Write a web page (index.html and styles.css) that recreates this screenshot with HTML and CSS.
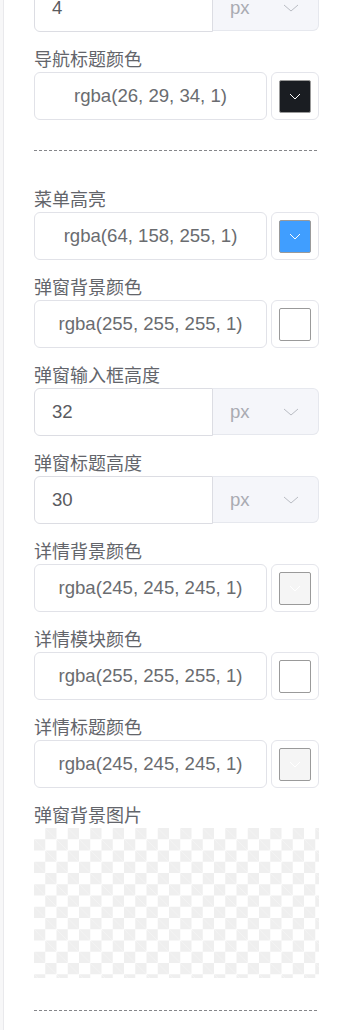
FILE: index.html
```html
<!DOCTYPE html>
<html lang="zh">
<head>
<meta charset="utf-8">
<link rel="stylesheet" href="styles.css">
</head>
<body>
<div class="page">
  <div class="rail"></div>
  <div class="content">
    <div class="item">
      <div class="num-row">
        <div class="num">4</div>
        <div class="unit"><span>px</span><svg class="chev" viewBox="0 0 16 8"><path d="M1 1 L8 7 L15 1" fill="none" stroke="#b9bcc3" stroke-width="1"/></svg></div>
      </div>
    </div>
    <div class="item">
      <div class="label">导航标题颜色</div>
      <div class="color-row">
        <div class="cinput">rgba(26, 29, 34, 1)</div>
        <div class="picker"><div class="swatch" style="background: rgba(26, 29, 34, 1)"><svg class="sw-chev" viewBox="0 0 12 7"><path d="M1 1 L6 6 L11 1" fill="none" stroke="#fff" stroke-width="1"/></svg></div></div>
      </div>
    </div>
    <div class="divider"></div>
    <div class="item">
      <div class="label">菜单高亮</div>
      <div class="color-row">
        <div class="cinput">rgba(64, 158, 255, 1)</div>
        <div class="picker"><div class="swatch" style="background: rgba(64, 158, 255, 1)"><svg class="sw-chev" viewBox="0 0 12 7"><path d="M1 1 L6 6 L11 1" fill="none" stroke="#fff" stroke-width="1"/></svg></div></div>
      </div>
    </div>
    <div class="item">
      <div class="label">弹窗背景颜色</div>
      <div class="color-row">
        <div class="cinput">rgba(255, 255, 255, 1)</div>
        <div class="picker"><div class="swatch" style="background: rgba(255, 255, 255, 1)"></div></div>
      </div>
    </div>
    <div class="item">
      <div class="label">弹窗输入框高度</div>
      <div class="num-row">
        <div class="num">32</div>
        <div class="unit"><span>px</span><svg class="chev" viewBox="0 0 16 8"><path d="M1 1 L8 7 L15 1" fill="none" stroke="#b9bcc3" stroke-width="1"/></svg></div>
      </div>
    </div>
    <div class="item">
      <div class="label">弹窗标题高度</div>
      <div class="num-row">
        <div class="num">30</div>
        <div class="unit"><span>px</span><svg class="chev" viewBox="0 0 16 8"><path d="M1 1 L8 7 L15 1" fill="none" stroke="#b9bcc3" stroke-width="1"/></svg></div>
      </div>
    </div>
    <div class="item">
      <div class="label">详情背景颜色</div>
      <div class="color-row">
        <div class="cinput">rgba(245, 245, 245, 1)</div>
        <div class="picker"><div class="swatch" style="background: rgba(245, 245, 245, 1)"><svg class="sw-chev" viewBox="0 0 12 7"><path d="M1 1 L6 6 L11 1" fill="none" stroke="#fff" stroke-width="1"/></svg></div></div>
      </div>
    </div>
    <div class="item">
      <div class="label">详情模块颜色</div>
      <div class="color-row">
        <div class="cinput">rgba(255, 255, 255, 1)</div>
        <div class="picker"><div class="swatch" style="background: rgba(255, 255, 255, 1)"></div></div>
      </div>
    </div>
    <div class="item">
      <div class="label">详情标题颜色</div>
      <div class="color-row">
        <div class="cinput">rgba(245, 245, 245, 1)</div>
        <div class="picker"><div class="swatch" style="background: rgba(245, 245, 245, 1)"><svg class="sw-chev" viewBox="0 0 12 7"><path d="M1 1 L6 6 L11 1" fill="none" stroke="#fff" stroke-width="1"/></svg></div></div>
      </div>
    </div>
    <div class="item">
      <div class="label">弹窗背景图片</div>
      <div class="checker"></div>
    </div>
    <div class="divider end"></div>
  </div>
</div>
</body>
</html>
```

FILE: styles.css
```css
html, body {
  margin: 0;
  padding: 0;
  background: #fff;
  font-family: "Liberation Sans", "Noto Sans CJK SC", sans-serif;
  overflow: hidden;
}
.page {
  display: flex;
  height: 1030px;
}
.rail {
  width: 3px;
  background: #f7f7f8;
  border-right: 1px solid #e9e9ec;
  flex: none;
}
.content {
  width: 285px;
  padding-left: 30px;
  margin-top: -16px;
  display: flex;
  flex-direction: column;
}
.item {
  margin-bottom: 16px;
}
.label {
  height: 24px;
  line-height: 24px;
  font-size: 18px;
  color: #63656b;
  white-space: nowrap;
}
.color-row {
  display: flex;
  gap: 4px;
  height: 48px;
}
.cinput {
  flex: 1;
  box-sizing: border-box;
  border: 1px solid #e1e2e8;
  border-radius: 6px;
  display: flex;
  align-items: center;
  justify-content: center;
  font-size: 18.6px;
  color: #6a6c70;
}
.picker {
  width: 48px;
  box-sizing: border-box;
  border: 1px solid #e4e5eb;
  border-radius: 6px;
  display: flex;
  align-items: center;
  justify-content: center;
}
.swatch {
  width: 32px;
  height: 33px;
  box-sizing: border-box;
  border: 1px solid #9a9a9a;
  border-radius: 2px;
  display: flex;
  align-items: center;
  justify-content: center;
}
.sw-chev {
  width: 12px;
  height: 7px;
}
.num-row {
  display: flex;
  height: 48px;
}
.num {
  width: 179px;
  box-sizing: border-box;
  border: 1px solid #dcdde3;
  border-radius: 6px 0 0 6px;
  padding-left: 17px;
  display: flex;
  align-items: center;
  font-size: 18.6px;
  color: #5a5b5f;
}
.unit {
  flex: 1;
  height: 47px;
  box-sizing: border-box;
  background: #f5f6fa;
  border: 1px solid #e6e8ee;
  border-left: none;
  border-radius: 0 6px 6px 0;
  display: flex;
  align-items: center;
  padding-left: 17px;
  padding-right: 19px;
  justify-content: space-between;
  font-size: 18.6px;
  color: #a9abb2;
}
.chev {
  width: 16px;
  height: 8px;
}
.divider {
  flex: none;
  height: 1px;
  background-image: linear-gradient(90deg, #85868a 3px, rgba(255,255,255,0) 3px);
  background-size: 5px 1px;
  background-repeat: repeat-x;
  margin-top: 14px;
  margin-bottom: 37px;
}
.divider.end {
  margin-top: 16px;
}
.checker {
  height: 150px;
  background-color: #fff;
  background-image:
    linear-gradient(45deg, #efefef 25%, transparent 25%, transparent 75%, #efefef 75%),
    linear-gradient(45deg, #efefef 25%, transparent 25%, transparent 75%, #efefef 75%);
  background-size: 22.5px 22.5px;
  background-position: 0 0, 11.25px 11.25px;
}
```
